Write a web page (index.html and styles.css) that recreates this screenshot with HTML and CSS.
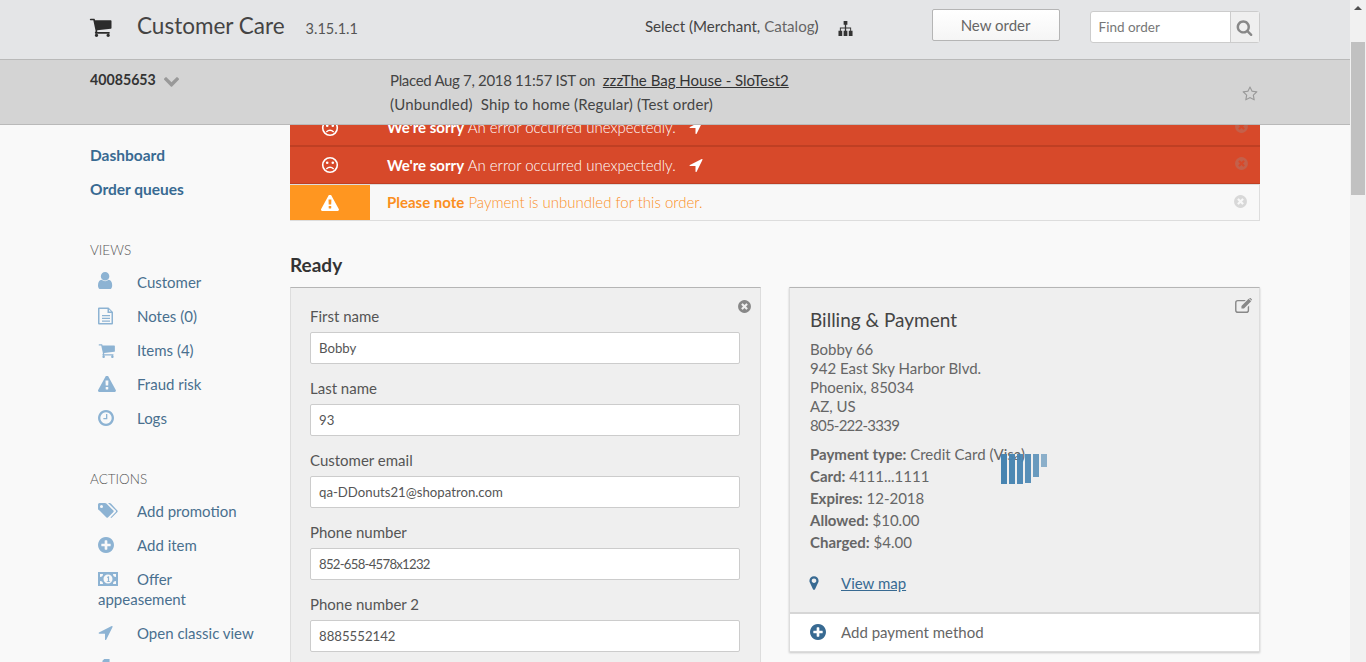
FILE: index.html
```html
<!DOCTYPE html>
<html lang="en">
<head>
  <meta charset="UTF-8">
  <title>Customer Care</title>
  <link rel="stylesheet" href="styles.css">
</head>
<body>

<svg class="sprite" xmlns="http://www.w3.org/2000/svg">
  <symbol id="i-cart" viewBox="0 128 1728 1536" preserveAspectRatio="xMinYMid meet"><path d="M704 1536q0 52-38 90t-90 38-90-38-38-90 38-90 90-38 90 38 38 90zm896 0q0 52-38 90t-90 38-90-38-38-90 38-90 90-38 90 38 38 90zm128-1088v512q0 24-16.5 42.5t-40.5 21.5l-1044 122q13 60 13 70 0 16-24 64h920q26 0 45 19t19 45-19 45-45 19h-1024q-26 0-45-19t-19-45q0-11 8-31.5t16-36 21.5-40 15.5-29.5l-177-823h-204q-26 0-45-19t-19-45 19-45 45-19h256q16 0 28.5 6.5t19.5 15.5 13 24.5 8 26 5.5 29.5 4.5 26h1201q26 0 45 19t19 45z"/></symbol>
  <symbol id="i-sitemap" viewBox="0 0 18 16"><path d="M7 0h4v4H9.7v3H15v3.5h1.500V16h-4v-5.500H14V8H9.700v2.500H11V16H7v-5.500h1.300V8H4v2.500h1.500V16h-4v-5.500H3V7h5.300V4H7z"/></symbol>
  <symbol id="i-search" viewBox="0 0 1792 1792"><path d="M1216 832q0-185-131.500-316.500t-316.500-131.500-316.500 131.500-131.500 316.500 131.500 316.500 316.500 131.500 316.500-131.500 131.500-316.500zm512 832q0 52-38 90t-90 38q-54 0-90-38l-343-342q-179 124-399 124-143 0-273.500-55.500t-225-150-150-225-55.500-273.500 55.500-273.500 150-225 225-150 273.500-55.500 273.500 55.500 225 150 150 225 55.500 273.500q0 220-124 399l343 343q37 37 37 90z"/></symbol>
  <symbol id="i-chevron" viewBox="109 448 1574 1120"><path d="M1683 808l-742 741q-19 19-45 19t-45-19l-742-741q-19-19-19-45.500t19-45.500l166-165q19-19 45-19t45 19l531 531 531-531q19-19 45-19t45 19l166 165q19 19 19 45.500t-19 45.500z"/></symbol>
  <symbol id="i-star" viewBox="0 0 1792 1792"><path d="M1201 1004l306-297-422-62-189-382-189 382-422 62 306 297-73 421 378-199 377 199zm527-357q0 22-26 48l-363 354 86 500q1 7 1 20 0 50-41 50-19 0-40-12l-449-236-449 236q-22 12-40 12-21 0-31.500-14.500t-10.500-35.500q0-6 2-20l86-500-364-354q-25-27-25-48 0-37 56-46l502-73 225-455q19-41 49-41t49 41l225 455 502 73q56 9 56 46z"/></symbol>
  <symbol id="i-frown" viewBox="0 0 18 18"><circle cx="9" cy="9" r="7.300" fill="none" stroke="currentColor" stroke-width="1.600"/><circle cx="6.200" cy="6.800" r="1.300"/><circle cx="11.800" cy="6.800" r="1.300"/><path d="M5.300 13q3.700-3.300 7.400 0" fill="none" stroke="currentColor" stroke-width="1.400"/></symbol>
  <symbol id="i-arrow" viewBox="128 256 1472 1408" preserveAspectRatio="xMinYMid meet"><path d="M1593 349l-640 1280q-17 35-57 35-5 0-15-2-22-5-35.500-22.500t-13.500-39.500v-576h-576q-22 0-39.500-13.500t-22.500-35.500 4-42 29-30l1280-640q13-7 29-7 27 0 45 19 15 14 18.500 34.500t-6.500 39.500z"/></symbol>
  <symbol id="i-warning" viewBox="0 64 1792 1600" preserveAspectRatio="xMinYMid meet"><path d="M1024 1375v-190q0-14-9.500-23.500t-22.500-9.500h-192q-13 0-22.500 9.500t-9.500 23.500v190q0 14 9.500 23.500t22.500 9.500h192q13 0 22.500-9.500t9.500-23.500zm-2-374l18-459q0-12-10-19-13-11-24-11h-220q-11 0-24 11-10 7-10 21l17 457q0 10 10 16.500t24 6.500h185q14 0 23.500-6.500t10.500-16.500zm-14-934l768 1408q35 63-2 126-17 29-46.500 46t-63.500 17h-1536q-34 0-63.500-17t-46.500-46q-37-63-2-126l768-1408q17-31 47-49t65-18 65 18 47 49z"/></symbol>
  <symbol id="i-close" viewBox="0 0 1792 1792"><path d="M1277 1122q0-26-19-45l-181-181 181-181q19-19 19-45 0-27-19-46l-90-90q-19-19-46-19-26 0-45 19l-181 181-181-181q-19-19-45-19-27 0-46 19l-90 90q-19 19-19 46 0 26 19 45l181 181-181 181q-19 19-19 45 0 27 19 46l90 90q19 19 46 19 26 0 45-19l181-181 181 181q19 19 45 19 27 0 46-19l90-90q19-19 19-46zm387-226q0 209-103 385.500t-279.500 279.500-385.500 103-385.500-103-279.500-279.500-103-385.500 103-385.500 279.500-279.500 385.500-103 385.500 103 279.500 279.500 103 385.500z"/></symbol>
  <symbol id="i-plus" viewBox="128 128 1536 1536" preserveAspectRatio="xMinYMid meet"><path d="M1344 960v-128q0-26-19-45t-45-19h-256v-256q0-26-19-45t-45-19h-128q-26 0-45 19t-19 45v256h-256q-26 0-45 19t-19 45v128q0 26 19 45t45 19h256v256q0 26 19 45t45 19h128q26 0 45-19t19-45v-256h256q26 0 45-19t19-45zm320-64q0 209-103 385.500t-279.500 279.500-385.500 103-385.500-103-279.500-279.500-103-385.500 103-385.500 279.500-279.500 385.500-103 385.500 103 279.500 279.500 103 385.500z"/></symbol>
  <symbol id="i-user" viewBox="256 128 1280 1536" preserveAspectRatio="xMinYMid meet"><path d="M1536 1399q0 109-62.500 187t-150.500 78h-854q-88 0-150.500-78t-62.500-187q0-85 8.500-160.500t31.500-152 58.500-131 94-89 134.500-34.500q131 128 313 128t313-128q76 0 134.500 34.500t94 89 58.500 131 31.500 152 8.500 160.500zm-256-887q0 159-112.500 271.500t-271.500 112.500-271.500-112.500-112.500-271.500 112.500-271.500 271.500-112.500 271.500 112.500 112.500 271.500z"/></symbol>
  <symbol id="i-file" viewBox="0 0 16 18" preserveAspectRatio="xMinYMid meet"><path d="M1 .5h9.500L15 5v11.500a1 1 0 0 1-1 1H1a1 1 0 0 1-1-1v-15a1 1 0 0 1 1-1zm.5 1.500v14h12V6H9.500V2zm9.500.5V4.500h2zM4 8h8v1.300H4zm0 2.700h8V12H4zm0 2.700h8v1.300H4z" fill-rule="evenodd"/></symbol>
  <symbol id="i-clock" viewBox="128 128 1536 1536" preserveAspectRatio="xMinYMid meet"><path d="M1024 544v448q0 14-9 23t-23 9h-320q-14 0-23-9t-9-23v-64q0-14 9-23t23-9h224v-352q0-14 9-23t23-9h64q14 0 23 9t9 23zm416 352q0-148-73-273t-198-198-273-73-273 73-198 198-73 273 73 273 198 198 273 73 273-73 198-198 73-273zm224 0q0 209-103 385.500t-279.500 279.500-385.500 103-385.500-103-279.500-279.500-103-385.500 103-385.500 279.500-279.500 385.500-103 385.500 103 279.500 279.500 103 385.500z"/></symbol>
  <symbol id="i-tags" viewBox="0 0 20 16" preserveAspectRatio="xMinYMid meet"><path fill-rule="evenodd" d="M1.500 0h5.500q.8 0 1.400.6l7 7q.6.600 0 1.300l-5.500 5.600q-.7.700-1.400 0l-7-7.100Q0 6.800 0 6V1.500Q0 0 1.500 0zM3.500 2a1.500 1.500 0 1 0 0 3 1.500 1.500 0 0 0 0-3z"/><path d="M10 0h1.500q.8 0 1.400.6l6.500 7q.6.600 0 1.300l-5.500 5.600q-.7.700-1.400.1l5.300-5.700q.6-.7 0-1.300z"/></symbol>
  <symbol id="i-money" viewBox="0 0 20 14" preserveAspectRatio="xMinYMid meet"><path fill-rule="evenodd" d="M0 0h20v14H0zM5 2H2v3a3 3 0 0 0 3-3zm10 0a3 3 0 0 0 3 3V2zM2 9v3h3a3 3 0 0 0-3-3zm16 0a3 3 0 0 0-3 3h3zM10 2.500a4.500 4.500 0 1 0 0 9 4.500 4.500 0 0 0 0-9zM9 5l1.500-.8h.6v5h1V10H8.800v-.8h1.100V5.500L9 6z"/></symbol>
  <symbol id="i-files" viewBox="0 0 20 18" preserveAspectRatio="xMinYMid meet"><path d="M7 0h6v5h-2v2H5V2zM2 5h8v13H0V7zM14 4h3l3 3v9h-8V7h2z"/></symbol>
  <symbol id="i-marker" viewBox="0 0 1792 1792"><path d="M1152 640q0-106-75-181t-181-75-181 75-75 181 75 181 181 75 181-75 75-181zm256 0q0 109-33 179l-364 774q-16 33-47.500 52t-67.500 19-67.500-19-46.500-52l-365-774q-33-70-33-179 0-212 150-362t362-150 362 150 150 362z"/></symbol>
  <symbol id="i-edit" viewBox="0 0 18 16"><path d="M3 2h8.500L10 3.500H3A1.500 1.500 0 0 0 1.500 5v8A1.500 1.500 0 0 0 3 14.500h9a1.500 1.500 0 0 0 1.500-1.500V9.500L15 8v5a3 3 0 0 1-3 3H3a3 3 0 0 1-3-3V5a3 3 0 0 1 3-3z"/><path d="M14.500.8l2.700 2.700L9.500 11.200H6.800V8.500zM15.500 0q.5-.3 1 .1l1.300 1.300q.4.500 0 1l-.3.300L15 .3z"/></symbol>
</svg>

<div class="ventana">
  <div class="pagina">

    <header class="cabecera">
      <svg class="ico ico-carrito"><use href="#i-cart"/></svg>
      <span class="marca">Customer Care</span>
      <span class="version">3.15.1.1</span>
      <span class="selector">Select (Merchant, <span class="selector-catalogo">Catalog</span>)</span>
      <svg class="ico ico-mapa"><use href="#i-sitemap"/></svg>
      <button class="boton-nuevo" type="button">New order</button>
      <div class="buscador">
        <input type="text" placeholder="Find order">
        <span class="buscador-boton"><svg class="ico ico-buscar"><use href="#i-search"/></svg></span>
      </div>
    </header>

    <div class="pedido">
      <div class="pedido-numero">
        <strong>40085653</strong>
        <svg class="ico ico-flecha"><use href="#i-chevron"/></svg>
      </div>
      <div class="pedido-datos">
        <div><span class="pedido-fecha">Placed Aug 7, 2018 11:57 IST on</span>&nbsp; <a href="#">zzzThe Bag House - SloTest2</a></div>
        <div class="pedido-envio">(Unbundled)&nbsp; Ship to home (Regular) (Test order)</div>
      </div>
      <svg class="ico ico-estrella"><use href="#i-star"/></svg>
    </div>

    <div class="cuerpo">
      <nav class="lateral">
        <a class="enlace-fuerte" href="#">Dashboard</a>
        <a class="enlace-fuerte" href="#">Order queues</a>

        <h4 class="titulo-vistas">VIEWS</h4>
        <a class="item" href="#"><svg class="ico ic-17"><use href="#i-user"/></svg>Customer</a>
        <a class="item" href="#"><svg class="ico ic-18"><use href="#i-file"/></svg>Notes (0)</a>
        <a class="item" href="#"><svg class="ico ic-15"><use href="#i-cart"/></svg>Items (4)</a>
        <a class="item" href="#"><svg class="ico ic-16"><use href="#i-warning"/></svg>Fraud risk</a>
        <a class="item" href="#"><svg class="ico ic-16"><use href="#i-clock"/></svg>Logs</a>

        <h4 class="titulo-acciones">ACTIONS</h4>
        <a class="item" href="#"><svg class="ico ic-16"><use href="#i-tags"/></svg>Add promotion</a>
        <a class="item" href="#"><svg class="ico ic-16"><use href="#i-plus"/></svg>Add item</a>
        <a class="item item-doble" href="#"><svg class="ico ic-14"><use href="#i-money"/></svg>Offer appeasement</a>
        <a class="item" href="#"><svg class="ico ic-14"><use href="#i-arrow"/></svg>Open classic view</a>
        <a class="item" href="#"><svg class="ico ic-16"><use href="#i-files"/></svg>Reorder</a>
      </nav>

      <main class="contenido">
        <div class="avisos">
          <div class="aviso aviso-error">
            <span class="aviso-icono"><svg class="ico"><use href="#i-frown"/></svg></span>
            <span class="aviso-texto"><b>We're sorry</b> An error occurred unexpectedly.</span>
            <svg class="ico ico-enviar"><use href="#i-arrow"/></svg>
            <svg class="ico ico-cerrar"><use href="#i-close"/></svg>
          </div>
          <div class="aviso aviso-error">
            <span class="aviso-icono"><svg class="ico"><use href="#i-frown"/></svg></span>
            <span class="aviso-texto"><b>We're sorry</b> An error occurred unexpectedly.</span>
            <svg class="ico ico-enviar"><use href="#i-arrow"/></svg>
            <svg class="ico ico-cerrar"><use href="#i-close"/></svg>
          </div>
          <div class="aviso aviso-nota">
            <span class="aviso-icono"><svg class="ico"><use href="#i-warning"/></svg></span>
            <span class="aviso-texto"><b>Please note</b> Payment is unbundled for this order.</span>
            <svg class="ico ico-cerrar"><use href="#i-close"/></svg>
          </div>
        </div>

        <h3 class="estado">Ready</h3>

        <div class="columnas">
          <section class="tarjeta tarjeta-form">
            <svg class="ico ico-cerrar-form"><use href="#i-close"/></svg>
            <label for="nombre">First name</label>
            <input id="nombre" type="text" value="Bobby">
            <label for="apellido">Last name</label>
            <input id="apellido" type="text" value="93">
            <label for="correo">Customer email</label>
            <input id="correo" type="text" value="qa-DDonuts21@shopatron.com">
            <label for="telefono">Phone number</label>
            <input id="telefono" class="campo-guiones" type="text" value="852-658-4578x1232">
            <label for="telefono2">Phone number 2</label>
            <input id="telefono2" type="text" value="8885552142">
          </section>

          <section class="tarjeta tarjeta-pago">
            <div class="pago-cuerpo">
              <svg class="ico ico-editar"><use href="#i-edit"/></svg>
              <h3>Billing &amp; Payment</h3>
              <p class="direccion">Bobby 66<br>942 East Sky Harbor Blvd.<br>Phoenix, 85034<br>AZ, US<br><span class="telefono-guiones">805-222-3339</span></p>
              <ul class="detalle">
                <li><b>Payment type:</b> Credit Card (Visa)</li>
                <li><b>Card:</b> 4111...1111</li>
                <li><b>Expires:</b> 12-2018</li>
                <li><b>Allowed:</b> $10.00</li>
                <li><b>Charged:</b> $4.00</li>
              </ul>
              <div class="mapa">
                <svg class="ico ico-pin"><use href="#i-marker"/></svg>
                <a href="#">View map</a>
              </div>
              <div class="cargando">
                <span class="barra b1"></span>
                <span class="barra b2"></span>
                <span class="barra b3"></span>
                <span class="barra b4"></span>
                <span class="barra b5"></span>
                <span class="barra b6"></span>
              </div>
            </div>
            <div class="pago-pie">
              <svg class="ico ico-mas"><use href="#i-plus"/></svg>
              Add payment method
            </div>
          </section>
        </div>
      </main>
    </div>

  </div>

  <div class="barra-scroll">
    <span class="scroll-flecha"></span>
    <span class="scroll-pulgar"></span>
  </div>
</div>

</body>
</html>
```

FILE: styles.css
```css
* {
  box-sizing: border-box;
}

html, body {
  height: 100%;
}

body {
  margin: 0;
  font-family: "Lato", "Open Sans", sans-serif;
  font-size: 15px;
  color: #555;
  background-color: #f9f9f9;
  overflow: hidden;
}

.sprite {
  display: none;
}

.ico {
  width: 16px;
  height: 16px;
  fill: currentColor;
  flex: none;
}

.ventana {
  display: flex;
  height: 662px;
}

.pagina {
  flex: 1;
  min-width: 0;
  display: flex;
  flex-direction: column;
}

/* cabecera */
.cabecera {
  height: 59px;
  flex: none;
  display: flex;
  align-items: center;
  padding: 0 90px 0 89px;
  background-color: #e4e5e7;
  color: #444;
  white-space: nowrap;
}

.cabecera > * {
  flex: none;
}

.ico-carrito {
  width: 24px;
  height: 20px;
  margin-top: -6px;
  color: #2b2b2b;
}

.marca {
  margin-left: 24px;
  font-size: 22.5px;
  color: #444;
  margin-top: -8px;
}

.version {
  margin-left: 21px;
  font-size: 14.5px;
  color: #555;
  margin-top: -3px;
}

.selector {
  margin-left: 287px;
  font-size: 15.1px;
  color: #444;
  margin-top: -8px;
}

.selector-catalogo {
  color: #666;
}

.ico-mapa {
  width: 17px;
  height: 15px;
  margin-left: 18px;
  margin-top: -3px;
  color: #333;
}

.boton-nuevo {
  width: 128px;
  height: 32px;
  margin-left: 78px;
  margin-top: -10px;
  border: 1px solid #b5b5b5;
  border-radius: 2px;
  background: linear-gradient(#fff, #f5f5f5);
  font-family: inherit;
  font-size: 15px;
  color: #666;
}

.buscador {
  width: 170px;
  height: 32px;
  margin-left: 30px;
  margin-top: -5px;
  display: flex;
  border: 1px solid #ccc;
  border-radius: 3px;
  background-color: #fff;
}

.buscador input {
  flex: 1;
  min-width: 0;
  border: none;
  padding: 0 8px;
  font-family: inherit;
  font-size: 13.5px;
  background: transparent;
}

.buscador input::placeholder {
  color: #777;
}

.buscador-boton {
  width: 29px;
  display: flex;
  align-items: center;
  justify-content: center;
  border-left: 1px solid #ccc;
  background-color: #efefef;
  color: #888;
}

.ico-buscar {
  width: 17px;
  height: 17px;
}

/* datos del pedido */
.pedido {
  height: 66px;
  flex: none;
  display: flex;
  padding: 8px 90px 0;
  background-color: #d4d4d4;
  border-top: 1px solid #b9b9b9;
  border-bottom: 1px solid #b9b9b9;
  color: #444;
  position: relative;
  z-index: 2;
}

.pedido-numero {
  width: 300px;
  display: flex;
  align-items: flex-start;
  gap: 8px;
  margin-top: 3px;
  font-size: 14.2px;
  color: #333;
}

.ico-flecha {
  width: 15px;
  height: 11px;
  margin-top: 5px;
  color: #999;
}

.pedido-datos {
  flex: 1;
  line-height: 24px;
  font-size: 15px;
}

.pedido-fecha {
  letter-spacing: -0.32px;
}

.pedido-envio {
  letter-spacing: 0.19px;
}

.pedido-datos a {
  color: #333;
}

.ico-estrella {
  align-self: center;
  width: 16px;
  height: 16px;
  margin-top: -4px;
  margin-right: 2px;
  color: #999;
}

/* cuerpo */
.cuerpo {
  flex: 1;
  min-height: 0;
  display: flex;
  overflow: hidden;
  padding: 0 90px;
}

.lateral {
  width: 200px;
  flex: none;
  padding-top: 20px;
}

.lateral h4 {
  margin: 0;
  font-size: 13.5px;
  font-weight: 300;
  color: #555;
  line-height: 20px;
}

.lateral .titulo-vistas {
  margin-top: 27px;
  margin-bottom: 12px;
}

.lateral .titulo-acciones {
  margin-top: 27px;
  margin-bottom: 12px;
}

.enlace-fuerte {
  display: block;
  height: 34px;
  line-height: 20px;
  font-size: 15.5px;
  font-weight: 700;
  color: #386a92;
  text-decoration: none;
}

.item {
  display: block;
  width: 170px;
  min-height: 34px;
  padding-left: 8px;
  line-height: 20px;
  color: #49708f;
  text-decoration: none;
}

.item-doble {
  min-height: 54px;
}

.item .ico {
  width: 20px;
  margin-right: 19px;
  color: #8db3d3;
  vertical-align: -2px;
}

.item .ic-14 { height: 14px; vertical-align: -1px; }
.item .ic-15 { height: 15px; }
.item .ic-16 { height: 16px; }
.item .ic-17 { height: 17px; vertical-align: -1px; }
.item .ic-18 { height: 18px; vertical-align: -3px; }

/* avisos */
.contenido {
  flex: 1;
  min-width: 0;
  margin-top: -15px;
}

.aviso {
  height: 37px;
  display: flex;
  align-items: center;
  position: relative;
}

.aviso-error {
  background-color: #d7492a;
  border-bottom: 2px solid #bf3f23;
  color: #fff;
}

.aviso-error + .aviso-error {
  border-bottom: 1px solid #bf3f23;
}

.aviso-nota {
  background-color: #f8f8f8;
  border: 1px solid #ddd;
  border-left: none;
  color: #fb8f1f;
}

.aviso-icono {
  width: 80px;
  height: 100%;
  display: flex;
  align-items: center;
  justify-content: center;
  margin-right: 17px;
}

.aviso-nota .aviso-icono {
  background-color: #ff9620;
  color: #fff;
}

.aviso-icono .ico {
  width: 18px;
  height: 18px;
}

.aviso-nota .aviso-icono .ico {
  width: 18px;
  height: 16px;
}

.aviso-texto {
  margin-top: -2px;
  font-weight: 300;
}

.aviso-error + .aviso-error .aviso-texto {
  margin-top: 0;
}

.aviso-texto b {
  font-weight: 700;
}

.ico-enviar {
  width: 14px;
  height: 13px;
  margin-left: 13px;
  color: #fff;
}

.ico-cerrar {
  position: absolute;
  right: 11px;
  top: 9px;
  width: 15px;
  height: 15px;
  color: #c4604a;
}

.aviso-nota .ico-cerrar {
  color: #d8d8d8;
}

.estado {
  margin: 33px 0 11px;
  font-size: 19px;
  line-height: 22px;
  font-weight: 700;
  color: #333;
}

.columnas {
  display: grid;
  grid-template-columns: 1fr 1fr;
  align-items: start;
  gap: 28px;
}

/* tarjetas */
.tarjeta {
  min-width: 0;
  position: relative;
  background-color: #efefef;
  border: 1px solid #ddd;
  border-top: 1px solid #b5b5b5;
}

.tarjeta-form {
  padding: 18px 20px 30px 19px;
  border-bottom: none;
}

.tarjeta-form label {
  display: block;
  line-height: 20px;
  margin-bottom: 6px;
  color: #555;
}

.tarjeta-form input {
  display: block;
  width: 100%;
  height: 32px;
  margin-bottom: 14px;
  padding: 0 8px;
  border: 1px solid #ccc;
  border-radius: 2px;
  background-color: #fff;
  font-family: inherit;
  font-size: 13.2px;
  color: #555;
}

.tarjeta-form .campo-guiones {
  letter-spacing: -0.75px;
}

.ico-cerrar-form {
  position: absolute;
  right: 8px;
  top: 11px;
  width: 15px;
  height: 15px;
  color: #888;
}

.tarjeta-pago {
  padding: 0;
  box-shadow: 0 1px 2px rgba(0, 0, 0, 0.2);
}

.pago-cuerpo {
  position: relative;
  height: 326px;
  padding: 20px 20px 0;
  border-bottom: 2px solid #d6d6d6;
}

.pago-cuerpo h3 {
  margin: 0 0 8px;
  font-size: 19px;
  line-height: 24px;
  font-weight: 400;
  color: #444;
}

.ico-editar {
  position: absolute;
  right: 7px;
  top: 10px;
  width: 17px;
  height: 15px;
  color: #888;
}

.direccion {
  margin: 0 0 8px;
  line-height: 19px;
  color: #666;
}

.telefono-guiones {
  letter-spacing: -0.75px;
}

.detalle {
  margin: 0;
  padding: 0;
  list-style: none;
  line-height: 22px;
  color: #666;
}

.mapa {
  display: flex;
  align-items: center;
  margin-top: 19px;
  line-height: 22px;
}

.mapa a {
  color: #386a92;
}

.ico-pin {
  margin-left: -4px;
  margin-right: 19px;
  color: #386a92;
}

.pago-pie {
  height: 37px;
  display: flex;
  align-items: center;
  padding: 0 0 2px 20px;
  background-color: #fff;
  color: #666;
}

.ico-mas {
  margin-right: 15px;
  color: #386a92;
}

/* indicador de carga sobre la tarjeta */
.cargando {
  position: absolute;
  left: 211px;
  top: 166px;
  display: flex;
  align-items: flex-start;
  gap: 2px;
}

.barra {
  width: 6px;
  height: 30px;
  background-color: #4784b1;
}

.b2 { opacity: 0.97; }
.b3 { opacity: 0.94; }
.b4 { height: 29px; opacity: 0.9; }
.b5 { height: 23px; opacity: 0.8; }
.b6 { height: 13px; opacity: 0.6; }

/* barra de desplazamiento */
.barra-scroll {
  width: 16px;
  flex: none;
  position: relative;
  background-color: #f1f1f1;
}

.scroll-flecha {
  position: absolute;
  left: 4px;
  top: 6px;
  border-left: 4px solid transparent;
  border-right: 4px solid transparent;
  border-bottom: 4px solid #505050;
}

.scroll-pulgar {
  position: absolute;
  left: 1px;
  top: 42px;
  width: 14px;
  height: 153px;
  background-color: #c1c1c1;
}
```
